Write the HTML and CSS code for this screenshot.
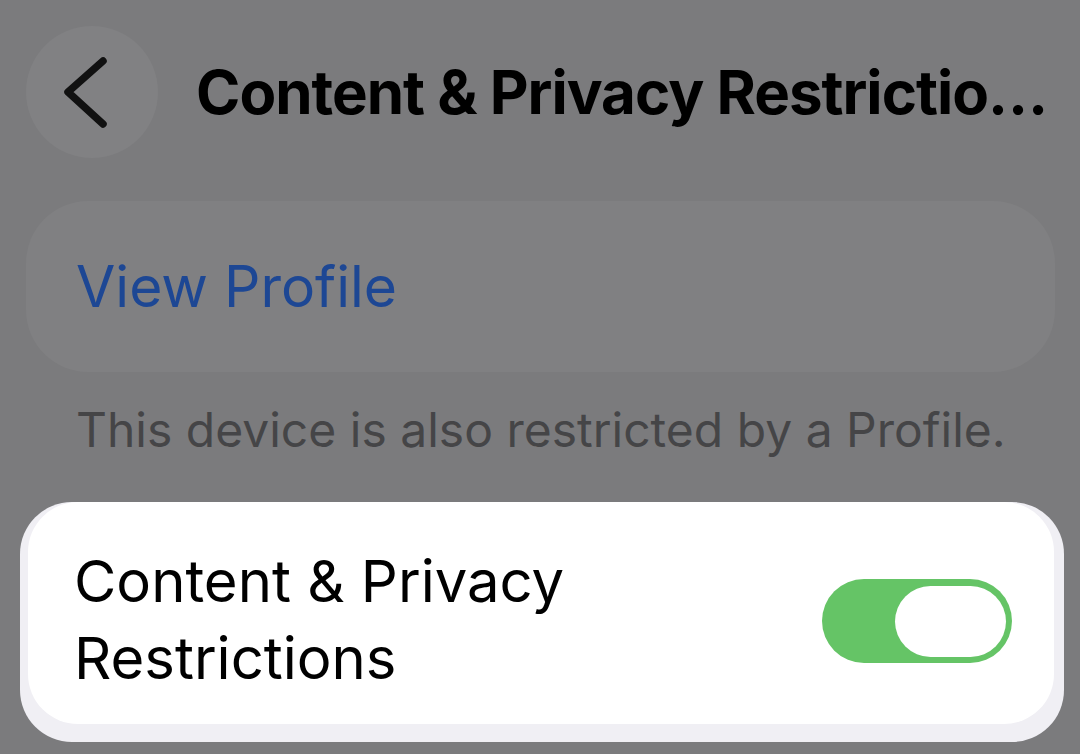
FILE: index.html
```html
<!DOCTYPE html>
<html>
<head>
<meta charset="utf-8">
<link rel="stylesheet" href="styles.css">
</head>
<body>
<div class="screen">
  <header class="header">
    <div class="back">
      <svg width="132" height="132" viewBox="0 0 132 132">
        <path d="M77 35 L42 66 L77 98" fill="none" stroke="#111" stroke-width="7.5" stroke-linecap="round" stroke-linejoin="round"/>
      </svg>
    </div>
    <h1 class="title">Content &amp; Privacy Restrictio…</h1>
  </header>
  <div class="profile-card">
    <span class="link">View Profile</span>
  </div>
  <p class="footnote">This device is also restricted by a Profile.</p>
  <div class="toggle-card">
    <div class="toggle-inner">
      <div class="label">Content &amp; Privacy<br>Restrictions</div>
      <div class="switch"><div class="knob"></div></div>
    </div>
  </div>
</div>
</body>
</html>
```

FILE: styles.css
```css
html, body {
  margin: 0;
  padding: 0;
}
body {
  background: #7b7b7d;
  font-family: Inter, "Noto Sans", sans-serif;
  width: 1080px;
  height: 754px;
  overflow: hidden;
}
.screen {
  display: flex;
  flex-direction: column;
}
.header {
  display: flex;
  align-items: center;
  gap: 38px;
  padding: 26px 20px 0 26px;
  height: 132px;
}
.back {
  flex: 0 0 132px;
  width: 132px;
  height: 132px;
  border-radius: 50%;
  background: #818183;
  display: flex;
}
.back svg {
  display: block;
}
.title {
  margin: 0;
  font-size: 60px;
  font-weight: 700;
  color: #000;
  white-space: nowrap;
  letter-spacing: -1px;
}
.profile-card {
  margin: 43px 25px 0 26px;
  height: 171px;
  border-radius: 62px;
  background: #808082;
  display: flex;
  align-items: center;
  padding-left: 50px;
}
.link {
  color: #1d4794;
  font-size: 57px;
  font-weight: 400;
}
.footnote {
  margin: 26px 0 0 76px;
  font-size: 48px;
  color: #454547;
  line-height: 64px;
}
.toggle-card {
  margin: 40px 16px 0 20px;
  height: 240px;
  border-radius: 52px;
  background: #f0eff4;
  display: flex;
}
.toggle-inner {
  flex: 1;
  margin: 0 10px 18px 8px;
  background: #fff;
  border-radius: 50px;
  display: flex;
  align-items: center;
  justify-content: space-between;
  padding: 0 42px 0 46px;
}
.label {
  font-size: 58px;
  line-height: 77px;
  color: #000;
  margin-top: 14px;
}
.switch {
  width: 190px;
  height: 84px;
  border-radius: 42px;
  background: #65c466;
  display: flex;
  align-items: center;
  justify-content: flex-end;
  padding-right: 6px;
  box-sizing: border-box;
  margin-top: 16px;
}
.knob {
  width: 111px;
  height: 71px;
  border-radius: 36px;
  background: #fff;
}
```
